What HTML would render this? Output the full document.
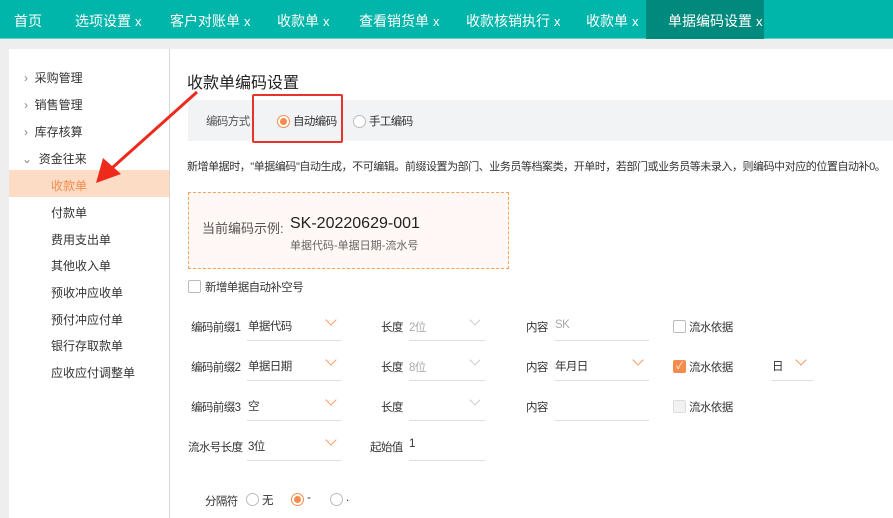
<!DOCTYPE html>
<html><head><meta charset="utf-8"><style>
*{margin:0;padding:0;box-sizing:border-box}
body{width:893px;height:518px;overflow:hidden;background:#eeeeee;font-family:"Liberation Sans","Noto Sans CJK SC",sans-serif;font-size:12px;color:#333;position:relative}
.a{position:absolute;white-space:nowrap}
.top{position:absolute;left:0;top:0;width:893px;height:39px;background:#00b5a9;border-bottom:1px solid #5fd0c8}
.tab{position:absolute;top:11px;color:#fff;font-size:14px}
.tab i{font-style:normal;font-size:13px;margin-left:4px}
.side{position:absolute;left:9px;top:49px;width:161px;height:469px;background:#fff;border-right:1px solid #d8d8d8}
.main{position:absolute;left:170px;top:49px;width:723px;height:469px;background:#fff}
.sl{font-size:12px;color:#333}
.ul{position:absolute;height:1px;background:#ddd}
.chev{position:absolute;width:8px;height:8px;border-right:1.5px solid #f59a5d;border-bottom:1.5px solid #f59a5d;transform:rotate(45deg)}
.chev.g{border-color:#ccc}
.cb{position:absolute;width:13px;height:13px;border:1px solid #bbb;border-radius:2px;background:#fff}
.rd{position:absolute;width:13px;height:13px;border:1px solid #bbb;border-radius:50%;background:#fff}
.rd.on{border-color:#f58b4c}
.rd.on:after{content:"";position:absolute;left:2px;top:2px;width:7px;height:7px;border-radius:50%;background:#f58b4c}
.gray{color:#aaa}
.f{font-size:11.5px;letter-spacing:-0.6px}
</style></head><body>
<div class="top"></div>
<div class="a" style="left:646px;top:0;width:118px;height:39px;background:#00897d"></div>
<div class="tab" style="left:14px">首页</div>
<div class="tab" style="left:75px">选项设置<i>x</i></div>
<div class="tab" style="left:170px">客户对账单<i>x</i></div>
<div class="tab" style="left:277px">收款单<i>x</i></div>
<div class="tab" style="left:359px">查看销货单<i>x</i></div>
<div class="tab" style="left:466px">收款核销执行<i>x</i></div>
<div class="tab" style="left:586px">收款单<i>x</i></div>
<div class="tab" style="left:668px">单据编码设置<i>x</i></div>

<div class="side"></div>
<div class="a" style="left:9px;top:170px;width:160px;height:27px;background:#fddcc6"></div>
<div class="a sl" style="left:24px;top:69px"><span style="color:#888">›</span>&nbsp;&nbsp;采购管理</div>
<div class="a sl" style="left:24px;top:96px"><span style="color:#888">›</span>&nbsp;&nbsp;销售管理</div>
<div class="a sl" style="left:24px;top:123px"><span style="color:#888">›</span>&nbsp;&nbsp;库存核算</div>
<div class="a sl" style="left:22px;top:150px"><span style="color:#888">⌄</span>&nbsp;&nbsp;资金往来</div>
<div class="a sl" style="left:51px;top:177px;color:#f58b4c">收款单</div>
<div class="a sl" style="left:51px;top:204px">付款单</div>
<div class="a sl" style="left:51px;top:231px">费用支出单</div>
<div class="a sl" style="left:51px;top:257px">其他收入单</div>
<div class="a sl" style="left:51px;top:284px">预收冲应收单</div>
<div class="a sl" style="left:51px;top:311px">预付冲应付单</div>
<div class="a sl" style="left:51px;top:337px">银行存取款单</div>
<div class="a sl" style="left:51px;top:364px">应收应付调整单</div>

<div class="main"></div>
<div class="a" style="left:187px;top:69px;font-size:16px;color:#222">收款单编码设置</div>
<div class="a" style="left:188px;top:100px;width:705px;height:41px;background:#f2f3f5"></div>
<div class="a f" style="left:206px;top:113px;color:#555">编码方式</div>
<div class="rd on" style="left:277px;top:115px"></div>
<div class="a f" style="left:293px;top:113px">自动编码</div>
<div class="rd" style="left:353px;top:115px"></div>
<div class="a f" style="left:369px;top:113px">手工编码</div>
<div class="a" style="left:252px;top:94px;width:91px;height:49px;border:2px solid #e8322a;border-radius:2px"></div>

<div class="a" style="left:187px;top:158px;font-size:11px;letter-spacing:-0.45px">新增单据时，"单据编码"自动生成，不可编辑。前缀设置为部门、业务员等档案类，开单时，若部门或业务员等未录入，则编码中对应的位置自动补0。</div>

<div class="a" style="left:188px;top:192px;width:321px;height:77px;border:1px dashed #f5a25f;background:#fff8f4"></div>
<div class="a" style="left:202px;top:218px;font-size:13px;color:#555">当前编码示例:</div>
<div class="a" style="left:290px;top:215px;font-size:16px;color:#222">SK-20220629-001</div>
<div class="a" style="left:290px;top:237px;font-size:11px;color:#666">单据代码-单据日期-流水号</div>

<div class="cb" style="left:188px;top:280px"></div>
<div class="a f" style="left:205px;top:279px">新增单据自动补空号</div>

<div class="a f" style="left:191px;top:319px">编码前缀1</div>
<div class="a f" style="left:248px;top:318px">单据代码</div>
<div class="chev" style="left:327px;top:316px"></div>
<div class="ul" style="left:247px;top:340px;width:94px"></div>
<div class="a f" style="left:381px;top:319px">长度</div>
<div class="a gray f" style="left:409px;top:319px">2位</div>
<div class="chev g" style="left:471px;top:316px"></div>
<div class="ul" style="left:409px;top:340px;width:76px"></div>
<div class="a f" style="left:526px;top:319px">内容</div>
<div class="a gray f" style="left:555px;top:319px">SK</div>
<div class="ul" style="left:555px;top:340px;width:94px"></div>
<div class="cb" style="left:673px;top:320px"></div>
<div class="a f" style="left:689px;top:319px">流水依据</div>

<div class="a f" style="left:191px;top:359px">编码前缀2</div>
<div class="a f" style="left:248px;top:358px">单据日期</div>
<div class="chev" style="left:327px;top:356px"></div>
<div class="ul" style="left:247px;top:380px;width:94px"></div>
<div class="a f" style="left:381px;top:359px">长度</div>
<div class="a gray f" style="left:409px;top:359px">8位</div>
<div class="chev g" style="left:471px;top:356px"></div>
<div class="ul" style="left:409px;top:380px;width:76px"></div>
<div class="a f" style="left:526px;top:359px">内容</div>
<div class="a f" style="left:555px;top:358px">年月日</div>
<div class="chev" style="left:634px;top:356px"></div>
<div class="ul" style="left:555px;top:380px;width:94px"></div>
<div class="cb" style="left:673px;top:360px;background:#f58b4c;border-color:#f58b4c;color:#fff;font-size:10px;line-height:11px;text-align:center">✓</div>
<div class="a f" style="left:689px;top:359px">流水依据</div>
<div class="a f" style="left:772px;top:358px">日</div>
<div class="chev" style="left:797px;top:356px"></div>
<div class="ul" style="left:772px;top:380px;width:41px"></div>

<div class="a f" style="left:191px;top:399px">编码前缀3</div>
<div class="a f" style="left:248px;top:398px">空</div>
<div class="chev" style="left:327px;top:396px"></div>
<div class="ul" style="left:247px;top:420px;width:94px"></div>
<div class="a f" style="left:381px;top:399px">长度</div>
<div class="chev g" style="left:471px;top:396px"></div>
<div class="ul" style="left:409px;top:420px;width:76px"></div>
<div class="a f" style="left:526px;top:399px">内容</div>
<div class="ul" style="left:555px;top:420px;width:94px"></div>
<div class="cb" style="left:673px;top:400px;background:#f2f2f2;border-color:#ddd"></div>
<div class="a f" style="left:689px;top:399px">流水依据</div>

<div class="a f" style="left:188px;top:439px">流水号长度</div>
<div class="a f" style="left:248px;top:438px">3位</div>
<div class="chev" style="left:327px;top:436px"></div>
<div class="ul" style="left:247px;top:460px;width:94px"></div>
<div class="a f" style="left:370px;top:439px">起始值</div>
<div class="a f" style="left:409px;top:438px">1</div>
<div class="ul" style="left:409px;top:460px;width:76px"></div>

<div class="a f" style="left:205px;top:493px">分隔符</div>
<div class="rd" style="left:246px;top:493px"></div>
<div class="a f" style="left:262px;top:492px">无</div>
<div class="rd on" style="left:291px;top:493px"></div>
<div class="a f" style="left:307px;top:492px">-</div>
<div class="rd" style="left:330px;top:493px"></div>
<div class="a f" style="left:346px;top:492px">.</div>

<svg class="a" style="left:0;top:0" width="893" height="518">
<line x1="197" y1="92" x2="112" y2="168" stroke="#ee2a1c" stroke-width="3"/>
<polygon points="96,183 103,158 121,174" fill="#ee2a1c"/>
</svg>
</body></html>
